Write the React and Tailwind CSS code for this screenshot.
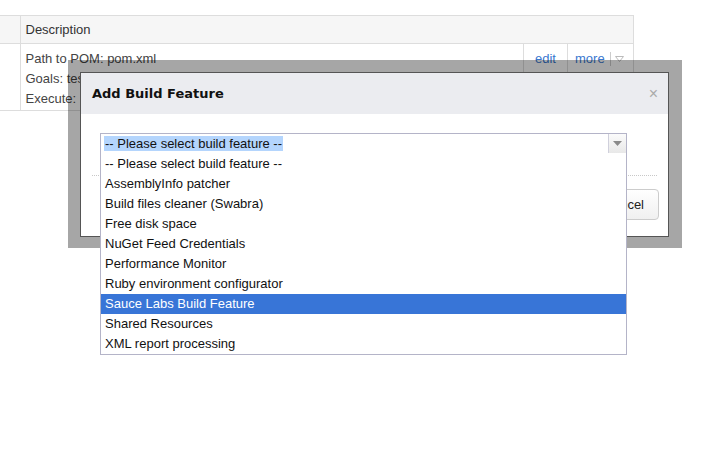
const features = [
  '-- Please select build feature --',
  'AssemblyInfo patcher',
  'Build files cleaner (Swabra)',
  'Free disk space',
  'NuGet Feed Credentials',
  'Performance Monitor',
  'Ruby environment configurator',
  'Sauce Labs Build Feature',
  'Shared Resources',
  'XML report processing',
]

const highlighted = 'Sauce Labs Build Feature'

function FeatureTable() {
  return (
    <div className="pt-[15px]">
      <table className="w-[634px] border-collapse text-[13px] text-[#333]">
        <thead>
          <tr className="h-[28px] bg-[#f6f6f6]">
            <th className="w-[20px] border-y border-r border-[#dddddd]"></th>
            <th
              colSpan={3}
              className="border-y border-r border-[#dddddd] pl-[5px] text-left font-normal"
            >
              Description
            </th>
          </tr>
        </thead>
        <tbody>
          <tr className="h-[67px] align-top">
            <td className="border-b border-r border-[#dddddd]"></td>
            <td className="border-b border-r border-[#dddddd] pl-[5px] pt-[5px] leading-[20px] text-[#444]">
              <div className="whitespace-nowrap">Path to POM: pom.xml</div>
              <div className="whitespace-nowrap">Goals: test</div>
              <div className="whitespace-nowrap">Execute:</div>
            </td>
            <td className="w-[44px] border-b border-r border-[#dddddd] pt-[5px] text-center leading-[20px] text-[#3b78cf]">
              edit
            </td>
            <td className="w-[66px] border-b border-r border-[#dddddd] pl-[7px] pt-[5px] leading-[20px]">
              <div className="flex items-center">
                <span className="text-[#3b78cf]">more</span>
                <span className="ml-[5px] h-[14px] w-px bg-[#cccccc]"></span>
                <svg width="9" height="6" viewBox="0 0 9 6" className="ml-[4px]">
                  <path d="M0.5 0.5 H8.5 L4.5 5.5 Z" fill="none" stroke="#bbbbbb" />
                </svg>
              </div>
            </td>
          </tr>
        </tbody>
      </table>
    </div>
  )
}

function FeatureSelect() {
  return (
    <div className="relative ml-[19px] w-[527px]">
      <div className="flex h-[21px] items-center border border-[#b4b4c8] bg-white">
        <div className="flex-1 pl-[3px]">
          <span className="bg-[#b4d5fd] px-px leading-[17px] text-[#111]">
            -- Please select build feature --
          </span>
        </div>
        <div className="flex h-full w-[18px] items-center justify-center border-l border-[#d0d0dc] bg-gradient-to-b from-[#fbfbfb] to-[#e8e8e8]">
          <svg width="9" height="5" viewBox="0 0 9 5">
            <path d="M0 0 H9 L4.5 5 Z" fill="#8a8a8a" />
          </svg>
        </div>
      </div>
      <ul className="absolute left-0 top-[20px] z-10 w-[527px] border border-t-0 border-[#b4b4c8] bg-white pt-px">
        {features.map((name) => (
          <li
            key={name}
            className={
              name === highlighted
                ? 'h-[20px] bg-[#3875d7] pl-[4px] leading-[20px] text-white'
                : 'h-[20px] pl-[4px] leading-[20px] text-[#111]'
            }
          >
            {name}
          </li>
        ))}
      </ul>
    </div>
  )
}

function AddFeatureDialog() {
  return (
    <div className="absolute left-[68px] top-[60px] h-[188px] w-[614px] bg-[rgba(0,0,0,0.35)] pl-[12px] pt-[12px]">
      <div className="h-[165px] w-[589px] border border-[#555] bg-white">
        <div className="flex h-[41px] items-center justify-between bg-[#ebecf0] pl-[11px] pr-[10px]">
          <h3 className="font-['DejaVu_Sans',sans-serif] text-[13px] font-bold text-[#111]">
            Add Build Feature
          </h3>
          <span className="text-[16px] leading-none text-[#aaa]">×</span>
        </div>
        <div className="pt-[19px]">
          <FeatureSelect />
          <div className="mx-[11px] mt-[21px] border-t border-dotted border-[#c8c8c8]"></div>
          <div className="mr-[9px] mt-[13px] flex justify-end">
            <button className="h-[31px] rounded-[4px] border border-[#cccccc] bg-gradient-to-b from-white to-[#f0f0f0] px-[14px] text-[13px] text-[#222]">
              Cancel
            </button>
          </div>
        </div>
      </div>
    </div>
  )
}

export default function App() {
  return (
    <div className="relative h-[451px] w-[711px] overflow-hidden bg-white font-['Liberation_Sans',Arial,sans-serif] text-[13px]">
      <FeatureTable />
      <AddFeatureDialog />
    </div>
  )
}
